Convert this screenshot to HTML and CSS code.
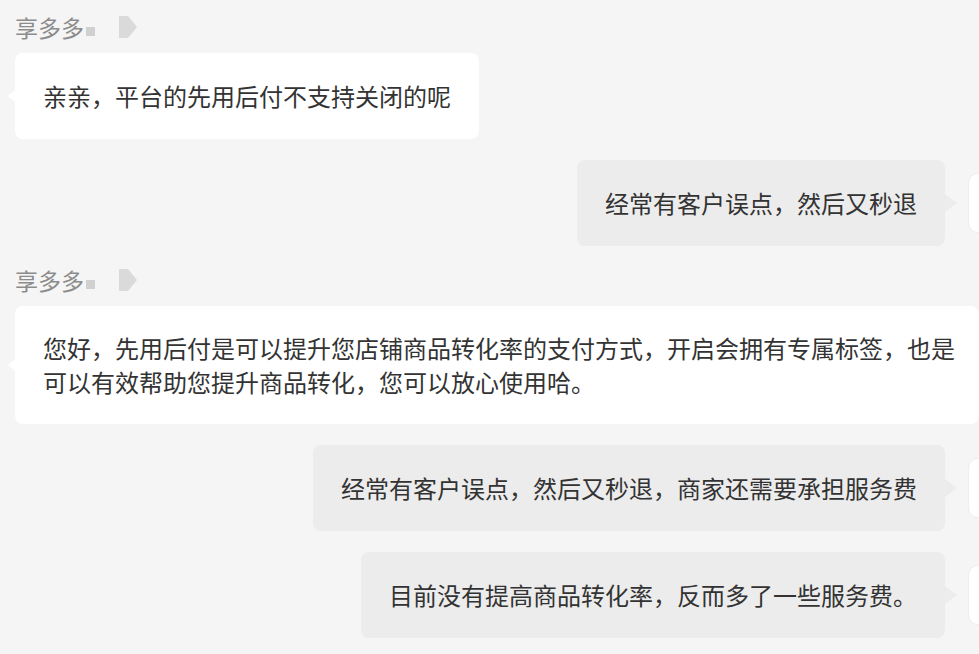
FILE: index.html
```html
<!DOCTYPE html>
<html lang="zh-CN">
<head>
  <meta charset="UTF-8" />
  <meta name="viewport" content="width=device-width, initial-scale=1.0"/>
  <title>聊天记录</title>
  <link rel="stylesheet" href="styles.css">
</head>
<body>

<div class="chat">

  <div class="name">
    <span>享多多</span>
    <i class="mark"></i>
    <svg class="tag" width="18" height="22" viewBox="0 0 18 22"><polygon points="0,0 9,0 18,11 9,22 0,22" fill="#dadada"/></svg>
  </div>
  <div class="row left">
    <div class="bubble">亲亲，平台的先用后付不支持关闭的呢</div>
  </div>

  <div class="row right">
    <div class="bubble">经常有客户误点，然后又秒退</div>
    <div class="avatar"></div>
  </div>

  <div class="name second">
    <span>享多多</span>
    <i class="mark"></i>
    <svg class="tag" width="18" height="22" viewBox="0 0 18 22"><polygon points="0,0 9,0 18,11 9,22 0,22" fill="#dadada"/></svg>
  </div>
  <div class="row left">
    <div class="bubble wide">您好，先用后付是可以提升您店铺商品转化率的支付方式，开启会拥有专属标签，也是可以有效帮助您提升商品转化，您可以放心使用哈。</div>
  </div>

  <div class="row right">
    <div class="bubble">经常有客户误点，然后又秒退，商家还需要承担服务费</div>
    <div class="avatar"></div>
  </div>

  <div class="row right">
    <div class="bubble">目前没有提高商品转化率，反而多了一些服务费。</div>
    <div class="avatar"></div>
  </div>

</div>

</body>
</html>
```

FILE: styles.css
```css
:root {
  --bg: #f5f5f5;
  --mine: #ececec;
  --theirs: #fff;
  --text: #333;
}
* {
  box-sizing: border-box;
}
body {
  margin: 0;
  background: var(--bg);
  color: var(--text);
  font-family: "Noto Sans CJK SC", "Noto Sans", sans-serif;
  overflow: hidden;
}
.chat {
  padding: 12px 0 0 15px;
}
.name {
  display: flex;
  align-items: center;
  height: 30px;
  font-size: 23px;
  color: #8c8c8c;
}
.name.second {
  margin-top: 19px;
}
.mark {
  width: 9px;
  height: 9px;
  margin: 8px 0 0 2px;
  background: #d0d0d0;
}
.tag {
  margin-left: 24px;
}
.row {
  display: flex;
  align-items: center;
  margin-top: 21px;
}
.name + .row {
  margin-top: 11px;
}
.row.right {
  justify-content: flex-end;
  margin-right: -29px;
  gap: 23px;
}
.bubble {
  position: relative;
  padding: 26px 28px;
  font-size: 24px;
  line-height: 34px;
  border-radius: 8px;
}
.left .bubble {
  background: var(--theirs);
}
.left .bubble::before {
  content: "";
  position: absolute;
  left: -7px;
  top: 50%;
  margin-top: -6px;
  border: 6px solid transparent;
  border-left: 0;
  border-right: 7px solid var(--theirs);
}
.right .bubble {
  background: var(--mine);
}
.right .bubble::after {
  content: "";
  position: absolute;
  right: -12px;
  top: 50%;
  margin-top: -9px;
  border: 9px solid transparent;
  border-right: 0;
  border-left: 12px solid var(--mine);
}
.bubble.wide {
  width: 964px;
  flex-shrink: 0;
  padding: 25px 20px 25px 28px;
}
.avatar {
  width: 40px;
  height: 60px;
  flex-shrink: 0;
  background: #fff;
  border-radius: 10px;
  border: 1px solid #eee;
}
```
